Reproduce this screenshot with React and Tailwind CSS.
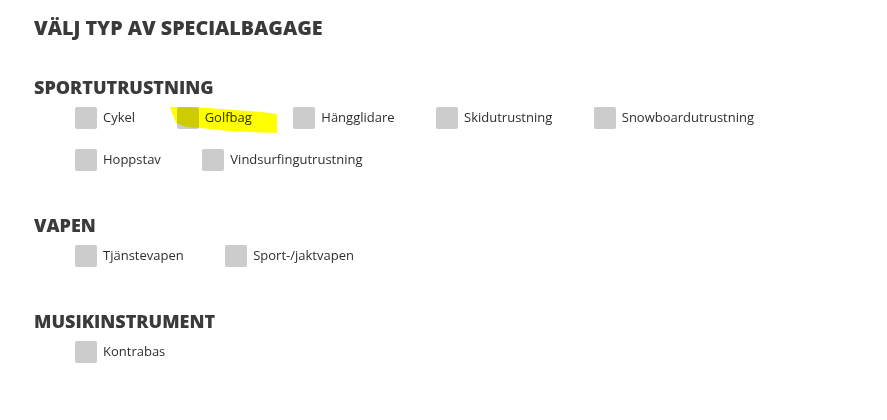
import React from 'react';

const sections = [
  {
    title: 'SPORTUTRUSTNING',
    items: ['Cykel', 'Golfbag', 'Hängglidare', 'Skidutrustning', 'Snowboardutrustning', 'Hoppstav', 'Vindsurfingutrustning'],
  },
  { title: 'VAPEN', items: ['Tjänstevapen', 'Sport-/jaktvapen'] },
  { title: 'MUSIKINSTRUMENT', items: ['Kontrabas'] },
];

const heading = { fontFamily: '"Open Sans", sans-serif' };

const Option = ({ label }) => (
  <label className="flex items-center h-[22px] mr-[41.5px]">
    <span className="w-[22px] h-[22px] rounded-[2px] bg-[#cccccc]" />
    <span className="ml-[6px] text-[13px] text-[#2e2e2e]" style={{ fontFamily: '"Open Sans", sans-serif' }}>
      {label}
    </span>
  </label>
);

const Highlight = () => (
  <svg className="absolute left-0 top-0 pointer-events-none mix-blend-multiply" width="887" height="420">
    <path
      d="M170 107 L200 107.5 L235 110 L262 112 L277 114 L277 133 L250 132 L228 131 L200 128 L186 127 L176 123 Z"
      fill="#ffff00"
    />
  </svg>
);

const App = () => (
  <div className="relative w-[887px] h-[420px] bg-white">
    <div className="pl-[34px] pt-[13px]">
      <h1 className="text-[19.7px] leading-[30px] font-extrabold text-[#3a3a3a]" style={heading}>
        VÄLJ TYP AV SPECIALBAGAGE
      </h1>
      {sections.map((s, i) => (
        <div key={s.title} className={i === 0 ? 'mt-[32px]' : 'mt-[42px]'}>
          <h2 className="text-[18px] leading-[24px] font-extrabold text-[#3a3a3a]" style={heading}>
            {s.title}
          </h2>
          <div className="flex flex-wrap pl-[41px] mt-[8px] gap-y-[20px] w-[800px]">
            {s.items.map((it) => (
              <Option key={it} label={it} />
            ))}
          </div>
        </div>
      ))}
    </div>
    <Highlight />
  </div>
);

export default App;
